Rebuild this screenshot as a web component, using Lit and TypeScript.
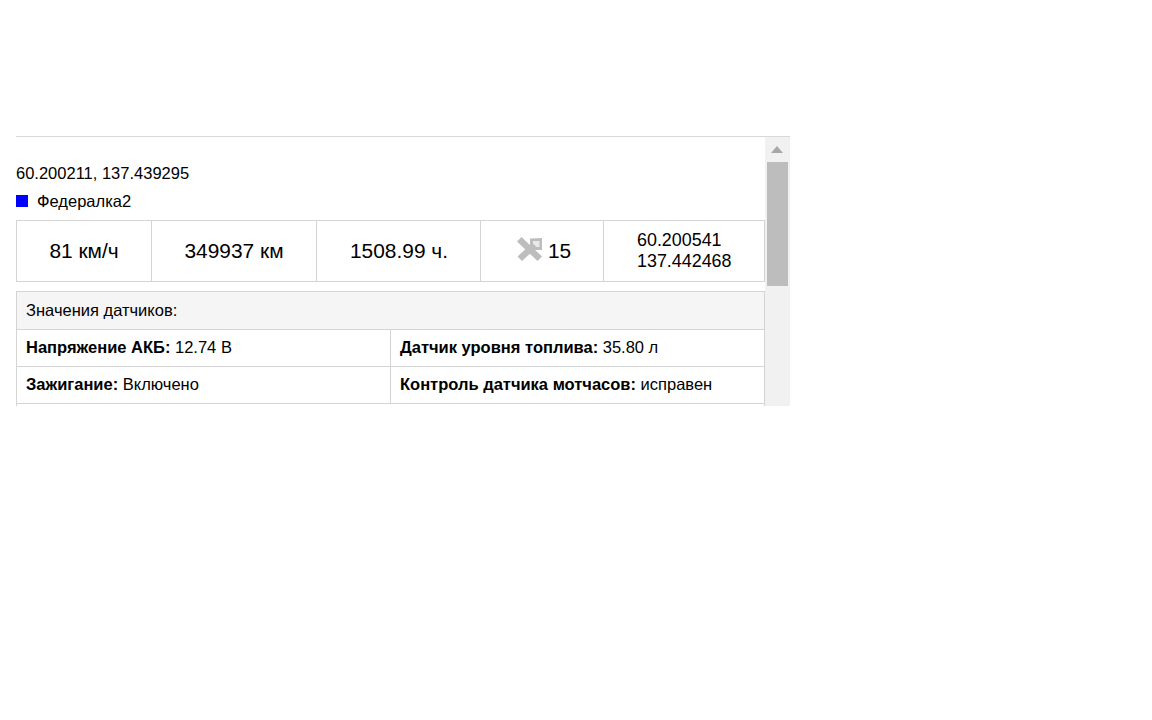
import { LitElement, html, css } from "lit";
import { customElement } from "lit/decorators.js";

@customElement("app-root")
export class AppRoot extends LitElement {
  static styles = css`
    :host { display: block; height: 720px; background: #fff; font-family: "Liberation Sans", Arial, sans-serif; color: #000; padding: 136px 362px 0 16px; box-sizing: border-box; }
    .panel { display: flex; height: 270px; border-top: 1px solid #d9d9d9; box-sizing: border-box; overflow: hidden; }
    .content { width: 749px; flex: none; padding-top: 25px; }
    .coords { font-size: 16.5px; line-height: 22px; height: 22px; }
    .track { margin-top: 6px; display: flex; align-items: center; gap: 9px; font-size: 16.5px; line-height: 22px; height: 22px; }
    .sq { width: 12px; height: 12px; background: #0000ff; }
    .stats { margin-top: 8px; display: grid; grid-template-columns: 135px 165px 164px 123px 162px; height: 62px; box-sizing: border-box; border: 1px solid #d4d4d4; }
    .stat { display: flex; align-items: center; justify-content: center; gap: 6px; font-size: 20.9px; border-left: 1px solid #d4d4d4; margin-left: -1px; }
    .stat:first-child { border-left: none; margin-left: 0; }
    .shift { padding-right: 1px; }
    .sats { padding-left: 3px; }
    .sats svg { margin-top: -5px; }
    .pos { font-size: 17.9px; line-height: 21px; display: block; text-align: left; padding: 9px 0 0 33px; }
    .sensors { margin-top: 9px; border: 1px solid #d4d4d4; border-bottom: none; }
    .head { background: #f5f5f5; line-height: 36px; padding-left: 9px; font-size: 16.5px; border-bottom: 1px solid #d4d4d4; box-sizing: border-box; height: 38px; }
    .row { display: grid; grid-template-columns: 373px 1fr; height: 37px; box-sizing: border-box; border-bottom: 1px solid #d4d4d4; font-size: 16.5px; line-height: 35px; }
    .row > div { padding-left: 9px; }
    .row > div + div { border-left: 1px solid #d4d4d4; }
    .scroll { width: 25px; flex: none; background: #f1f1f1; display: flex; flex-direction: column; align-items: center; }
    .arrow { height: 25px; flex: none; display: flex; align-items: center; justify-content: center; padding-right: 1px; }
    .thumb { width: 21px; height: 124px; background: #bdbdbd; }
  `;

  render() {
    return html`
      <div class="panel">
        <div class="content">
          <div class="coords">60.200211, 137.439295</div>
          <div class="track"><span class="sq"></span><span>Федералка2</span></div>
          <div class="stats">
            <div class="stat shift">81 км/ч</div>
            <div class="stat shift">349937 км</div>
            <div class="stat">1508.99 ч.</div>
            <div class="stat sats">
              <svg width="25" height="24" viewBox="0 0 25 24">
                <path fill="#bdbdbd" d="M4.5 0 L25 19.5 L20.5 24 L0 4.5 Z"/>
                <path fill="#bdbdbd" d="M0.5 19.5 L13 8 L13 1.5 L25 1 L25 13 L17 13 L5 24 Z"/>
                <path fill="#e9e9e9" d="M16 4 L22.5 4 L22.5 10 L19.5 10 L16 6.5 Z"/>
              </svg>
              <span>15</span>
            </div>
            <div class="stat pos"><div>60.200541</div><div>137.442468</div></div>
          </div>
          <div class="sensors">
            <div class="head">Значения датчиков:</div>
            <div class="row"><div><b>Напряжение АКБ:</b> 12.74 В</div><div><b>Датчик уровня топлива:</b> 35.80 л</div></div>
            <div class="row"><div><b>Зажигание:</b> Включено</div><div><b>Контроль датчика мотчасов:</b> исправен</div></div>
            <div class="row"></div>
          </div>
        </div>
        <div class="scroll">
          <div class="arrow"><svg width="12" height="7" viewBox="0 0 12 7"><path fill="#a8a8a8" d="M6 0 L12 7 L0 7 Z"/></svg></div>
          <div class="thumb"></div>
        </div>
      </div>
    `;
  }
}
